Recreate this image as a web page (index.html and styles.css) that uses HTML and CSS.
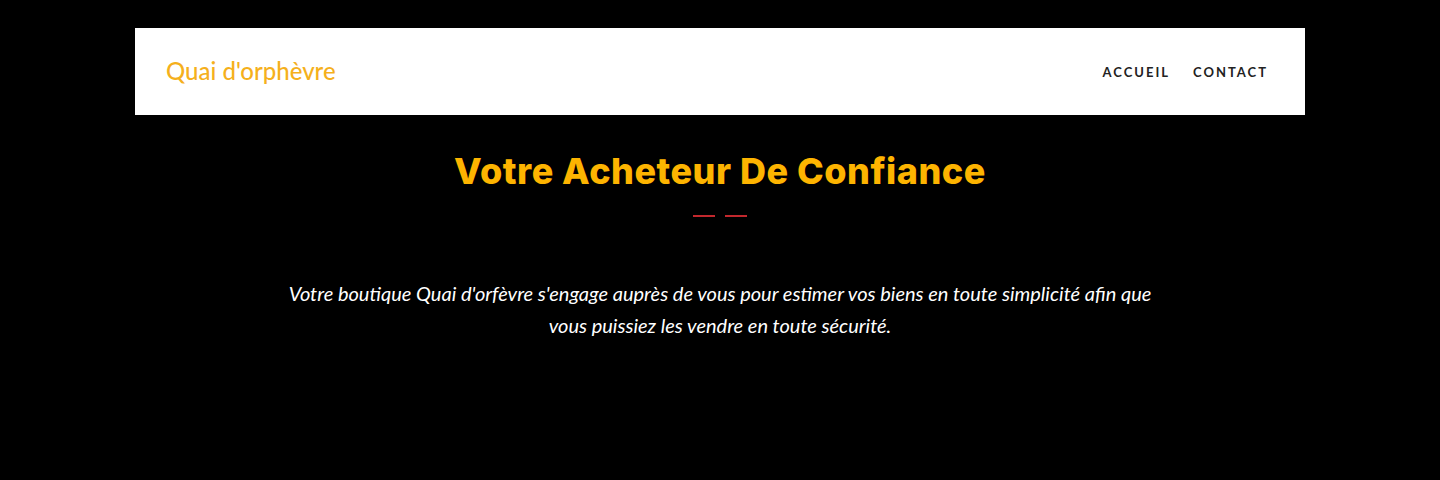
FILE: index.html
```html
<!DOCTYPE html>
<html lang="fr">
<head>
<meta charset="utf-8">
<title>Quai d'orphèvre</title>
<link rel="stylesheet" href="styles.css">
</head>
<body>
<div class="page">
  <header class="navbar">
    <a class="brand" href="#">Quai d'orphèvre</a>
    <nav class="nav">
      <a href="#">Accueil</a>
      <a href="#">Contact</a>
    </nav>
  </header>
  <section class="hero">
    <h1 class="title">Votre Acheteur De Confiance</h1>
    <div class="divider"><span></span><span></span></div>
    <p class="lead">Votre boutique Quai d'orfèvre s'engage auprès de vous pour estimer vos biens en toute simplicité afin que vous puissiez les vendre en toute sécurité.</p>
  </section>
</div>
</body>
</html>
```
FILE: styles.css
```css
html, body {
  margin: 0;
  padding: 0;
  background: #000;
}
body {
  font-family: Lato, "Open Sans", sans-serif;
  height: 480px;
  overflow: hidden;
}
.page {
  width: 1170px;
  margin: 28px auto 0;
}
.navbar {
  background: #fff;
  height: 87px;
  display: flex;
  align-items: center;
  justify-content: space-between;
  padding: 0 39px 0 31px;
  box-sizing: border-box;
}
.brand {
  font-family: Lato, sans-serif;
  font-size: 24px;
  font-weight: 500;
  color: #f5b01c;
  text-decoration: none;
  margin-top: -2px;
}
.nav {
  display: flex;
  gap: 23px;
}
.nav a {
  font-family: Lato, sans-serif;
  font-weight: 700;
  font-size: 13px;
  letter-spacing: 2px;
  text-transform: uppercase;
  color: #222;
  text-decoration: none;
}
.nav a:last-child {
  margin-right: -2px;
}
.hero {
  display: flex;
  flex-direction: column;
  align-items: center;
  text-align: center;
}
.title {
  margin: 33px 0 0;
  font-family: Inter, "DejaVu Sans", sans-serif;
  font-weight: 800;
  font-size: 36px;
  line-height: 46px;
  letter-spacing: 0.5px;
  color: #fdb400;
}
.divider {
  display: flex;
  gap: 10px;
  margin-top: 21px;
}
.divider span {
  display: block;
  width: 22px;
  height: 2px;
  background: #c2282d;
}
.lead {
  margin: 60px 0 0;
  max-width: 880px;
  font-family: Lato, sans-serif;
  font-style: italic;
  font-size: 20px;
  line-height: 32px;
  color: #fff;
}
```
